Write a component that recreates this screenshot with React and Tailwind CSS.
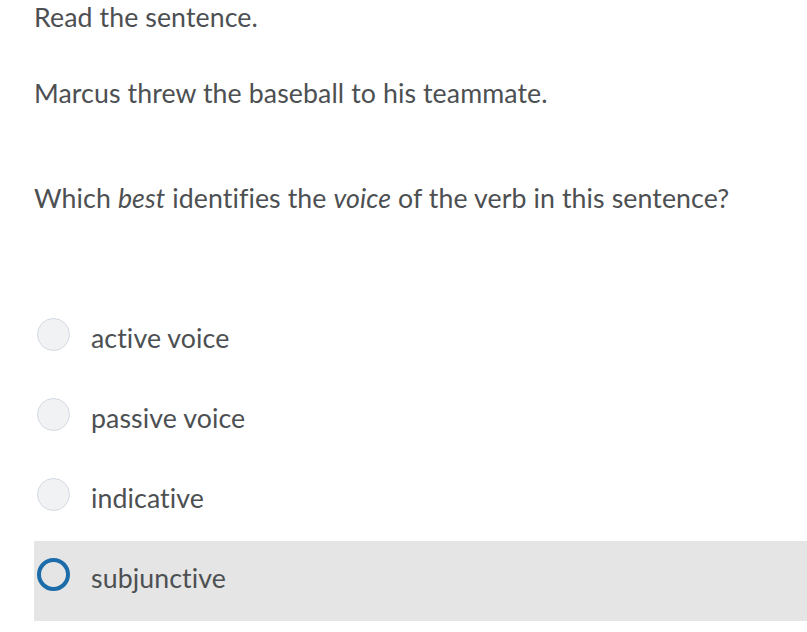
export default function App() {
  const options = ["active voice", "passive voice", "indicative", "subjunctive"];
  return (
    <div className="w-[807px] h-[632px] bg-white overflow-hidden text-[#4d5052] tracking-[0.1px]" style={{ fontFamily: "Lato, 'Open Sans', sans-serif" }}>
      <div className="pl-[34px]">
        <p className="text-[26.7px] leading-[34px]">Read the sentence.</p>
        <p className="text-[26.7px] leading-[34px] mt-[42px]">Marcus threw the baseball to his teammate.</p>
        <p className="text-[26.7px] leading-[34px] mt-[71px]">
          Which <em>best</em> identifies the <em>voice</em> of the verb in this sentence?
        </p>
      </div>
      <div className="mt-[86px] pl-[34px] flex flex-col">
        {options.map((o, i) => {
          const sel = i === 3;
          return (
            <div key={o} className={`h-[80px] flex items-center ${sel ? "bg-[#e5e5e5]" : ""}`}>
              <div className={`ml-[3px] -mt-[14px] w-[33px] h-[33px] rounded-full ${sel ? "border-[4px] border-[#1b6ca8] bg-[#e5e5e5]" : "border border-[#d3d9e3] bg-[#f1f2f4]"}`} />
              <span className="ml-[21px] text-[26.7px] leading-[34px] -mt-[7px]">{o}</span>
            </div>
          );
        })}
      </div>
    </div>
  );
}
